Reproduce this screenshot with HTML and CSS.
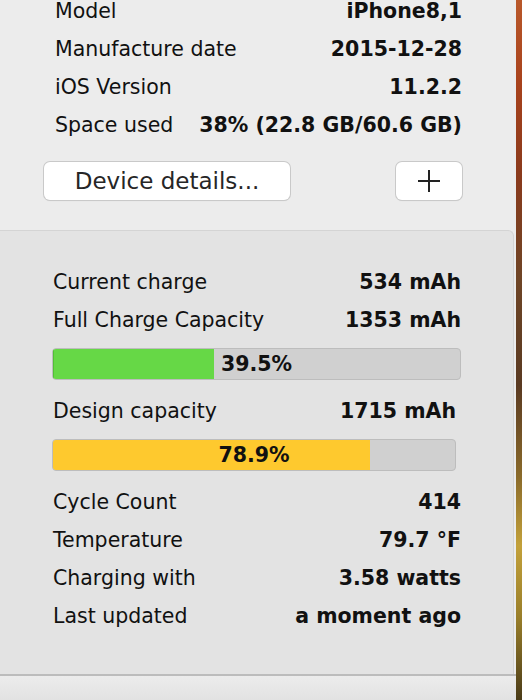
FILE: index.html
```html
<!DOCTYPE html>
<html>
<head>
<meta charset="utf-8">
<link rel="stylesheet" href="styles.css">
</head>
<body>
<div class="screen">
  <div class="panel">
    <div class="info">
      <div class="row"><span class="label">Model</span><span class="value">iPhone8,1</span></div>
      <div class="row"><span class="label">Manufacture date</span><span class="value">2015-12-28</span></div>
      <div class="row"><span class="label">iOS Version</span><span class="value">11.2.2</span></div>
      <div class="row"><span class="label">Space used</span><span class="value">38% (22.8 GB/60.6 GB)</span></div>
      <div class="buttons">
        <button class="btn btn-details">Device details...</button>
        <button class="btn btn-plus" aria-label="Add">
          <svg width="22" height="22" viewBox="0 0 22 22"><path d="M11 0V22M0 11H22" stroke="#222" stroke-width="2" fill="none"/></svg>
        </button>
      </div>
    </div>
    <div class="battery">
      <div class="row"><span class="label">Current charge</span><span class="value">534 mAh</span></div>
      <div class="row"><span class="label">Full Charge Capacity</span><span class="value">1353 mAh</span></div>
      <div class="bar">
        <div class="fill green" style="width:39.5%"></div>
        <span class="bar-text">39.5%</span>
      </div>
      <div class="narrow">
        <div class="row"><span class="label">Design capacity</span><span class="value">1715 mAh</span></div>
        <div class="bar">
          <div class="fill yellow" style="width:78.9%"></div>
          <span class="bar-text">78.9%</span>
        </div>
      </div>
      <div class="row"><span class="label">Cycle Count</span><span class="value">414</span></div>
      <div class="row"><span class="label">Temperature</span><span class="value">79.7 °F</span></div>
      <div class="row"><span class="label">Charging with</span><span class="value">3.58 watts</span></div>
      <div class="row"><span class="label">Last updated</span><span class="value">a moment ago</span></div>
    </div>
    <div class="footer"></div>
  </div>
  <div class="wallpaper"></div>
</div>
</body>
</html>
```

FILE: styles.css
```css
html, body {
  margin: 0;
  padding: 0;
  height: 100%;
  overflow: hidden;
}
body {
  font-family: "DejaVu Sans", "Liberation Sans", sans-serif;
  color: #111;
}
.screen {
  display: flex;
  height: 700px;
}
.panel {
  width: 516px;
  flex: none;
  background: #ececec;
  display: flex;
  flex-direction: column;
}
.wallpaper {
  flex: 1;
  background: linear-gradient(180deg,
    #b9582a 0%, #a8421c 12%, #8a3a1c 25%, #6e4526 40%,
    #5a3a22 55%, #8a6a2a 68%, #c3a13a 78%, #9a7f2a 88%, #4a3b18 100%);
}
.info {
  margin-top: -8px;
  padding: 0 54px 0 55px;
}
.row {
  display: flex;
  justify-content: space-between;
  align-items: center;
  height: 38px;
  line-height: 38px;
  font-size: 20.5px;
  white-space: nowrap;
}
.label {
  font-weight: normal;
}
.value {
  font-weight: bold;
}
.buttons {
  display: flex;
  justify-content: space-between;
  margin: 18px 0 0 -11px;
}
.btn {
  height: 38px;
  background: #fff;
  border: none;
  border-radius: 6px;
  box-shadow: 0 0 0 1px #c9c9c9, 0 1px 1px rgba(0,0,0,0.12);
  font-family: "DejaVu Sans", "Liberation Sans", sans-serif;
  color: #262626;
  padding: 0;
  display: flex;
  align-items: center;
  justify-content: center;
}
.btn-details {
  width: 246px;
  font-size: 23px;
}
.btn-plus {
  width: 66px;
}
.battery {
  margin-top: 30px;
  background: #e3e3e3;
  border-top: 1px solid #d4d4d4;
  border-right: 1px solid #d4d4d4;
  border-top-right-radius: 6px;
  margin-right: 2px;
  padding: 32px 52px 39px 53px;
}
.bar {
  position: relative;
  height: 30px;
  margin: 9px 0 12px -1px;
  background: #d0d0d0;
  border: 1px solid #bdbdbd;
  border-radius: 4px;
  overflow: hidden;
  display: flex;
  align-items: center;
  justify-content: center;
}
.fill {
  position: absolute;
  left: 0;
  top: 0;
  bottom: 0;
}
.fill.green {
  background: #66d846;
  box-shadow: inset 1px 0 0 #53bf37;
}
.fill.yellow {
  background: #fec92e;
}
.bar-text {
  position: relative;
  font-weight: bold;
  font-size: 20.5px;
  color: #111;
}
.narrow {
  padding-right: 5px;
}
.footer {
  flex: 1;
  border-top: 2px solid #bcbcbc;
  background: linear-gradient(180deg, #ececec, #e2e2e2);
}
```
